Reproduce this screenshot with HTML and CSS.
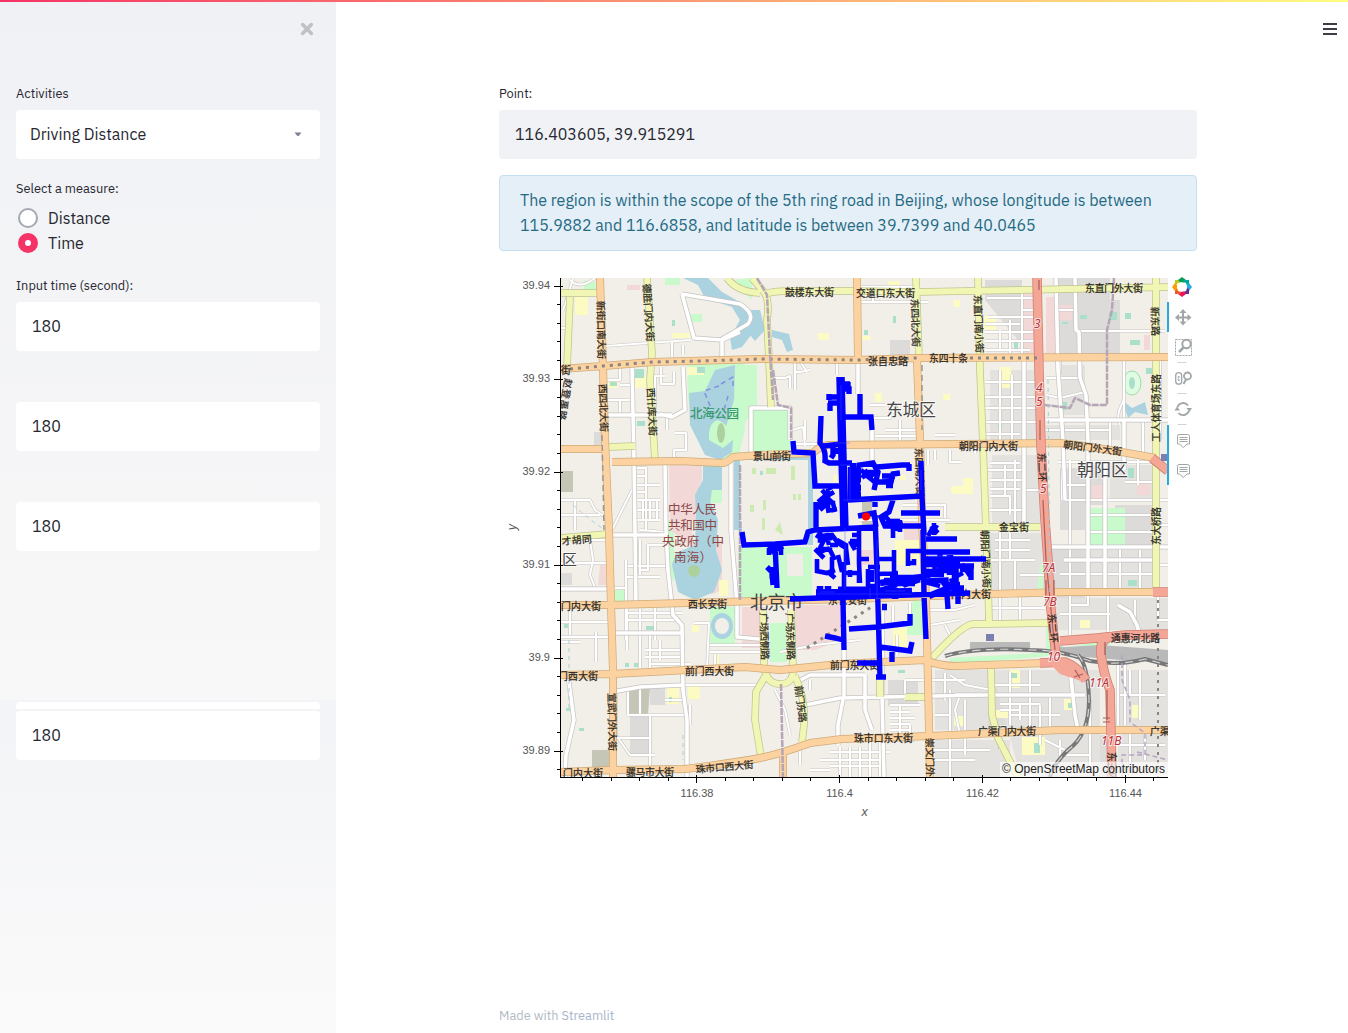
FILE: index.html
```html
<!DOCTYPE html>
<html lang="en">
<head>
<meta charset="utf-8">
<title>Driving Distance</title>
<link rel="stylesheet" href="styles.css">
</head>
<body>
<div class="decoration"></div>
<div class="app">
<aside class="sidebar">
  <button class="close" aria-label="Close"><svg width="14" height="14" viewBox="0 0 14 14"><path d="M2.6 2.6 11.4 11.4M11.4 2.6 2.6 11.4"/></svg></button>
  <label class="label">Activities</label>
  <div class="field select"><span>Driving Distance</span><svg width="8" height="5" viewBox="0 0 8 5"><path d="M0.5 .5h7L4.8 3.8q-.8.7-1.6 0z"/></svg></div>
  <div class="label measure">Select a measure:</div>
  <div class="radio"><i></i><span>Distance</span></div>
  <div class="radio on"><i></i><span>Time</span></div>
  <div class="label time">Input time (second):</div>
  <div class="field">180</div>
  <div class="field next">180</div>
  <div class="field next">180</div>
  <div class="strip"></div>
  <div class="field last">180</div>
</aside>
<main class="main">
  <button class="menu" aria-label="Menu"><i></i><i></i><i></i></button>
  <div class="content">
    <label class="label">Point:</label>
    <div class="field point">116.403605, 39.915291</div>
    <div class="info">The region is within the scope of the 5th ring road in Beijing, whose longitude is between<br>115.9882 and 116.6858, and latitude is between 39.7399 and 40.0465</div>
    <svg class="chart" width="698" height="560" viewBox="499 267 698 560">
      <defs>
        <clipPath id="frame"><rect x="561" y="278" width="607" height="499"/></clipPath>
        <path id="minor" d="M573 278 565 305 563 310M561 328H567M595 278Q580 290 570 280M606 346 690 340M672 341V362M683 345V355M620 367V380H606M620 385H632M661 367V384H674V372M665 376H655V410M606 400H633M620 400V415M606 415H672M675 433H686V450H674V462M667 430V416M635 468H646V530M634 476H646M634 485H660M634 492H646M634 500H660M634 510H660M634 520H660M643 500V520M650 500V520M657 500V520M632 490 612 530M561 500H590L595 510 610 520M575 500V530M561 515H600M590 540 593 560 590 575 596 590M561 563H606M606 588H626V640M626 560V605M628 566H666M626 577H660M640 540V575M640 570H648V545H668M583 540H610M627 605V650M640 605V668M627 613H682M627 620H680M650 632V668M660 640V660M655 605V640M645 650H682M645 657H682M650 664H690M561 637H610M570 605V635M596 632V662M561 642H580M561 622H608M616 690V735L630 755H655M627 715H690M640 687V715M650 715V777M628 715V690M616 738H650M665 700H684M690 705V725M682 685H760M694 623H709L707 668M710 652H765M710 645H765M715 655V665M640 530 666 532"/>
        <path id="wide" d="M682 294 694 338 722 340 740 332M682 294 740 304Q756 314 748 324L722 339V357M632 367 634 460 635 530 636 605M683 367 685 410 672 417 660 414M606 415H672M665 463 666 530 668 570 673 615 682 625 683 690 687 720 687 777M731 463V530L737 605 737 637 770 640M751 456V408H790V440M561 589H615M610 535H665M612 633H682M568 675 574 720 566 755 565 777M612 692 640 687 682 685M858 361V394M872 430V460M844 650V695L838 725V745M865 675V710L872 730M882 660V695L884 777M797 682 810 675 865 675M805 705 840 698 885 697 985 695M1024 360V525M1056 278 1058 370 1063 440 1065 500M1075 278 1076 330 1079 332 1080 378 1086 395 1088 440 1088 592M1046 420 1168 420M1105 462V592M1124 420V470M1050 547H1168M1064 560H1155M1118 605 1130 612 1137 625 1140 637M1070 668 1075 715 1078 730M955 695H1085"/>
        <path id="minor2" d="M860 287H915M860 302H928M873 303V290M795 361V372H800L810 370M800 361 807 372M775 378H785L790 376V388M795 370V390M837 361V375M792 430 803 427 805 446M792 444H820M805 420V440M872 418H890V405M885 430H920M900 420V445M870 405H885M876 436H918M950 450V462H961M975 448V453M935 450V460M928 465V450M860 520H950M903 505H945V518M935 435H955M985 350H1030M985 332H1033M1000 330V350M1010 320V357M1022 290V357M987 298H1035M1022 310H1035M988 317H1035M985 324H1020M985 341H1035M985 382H1040M985 408H1040M985 422H1040M985 397H1040M985 434H1020M1000 370V440M1012 375V440M985 470H1024M990 463H1020M990 480H1024M990 489H1020M1005 465V495M990 496H1010V514M1015 460V530M985 510H1024M1024 490H1040M1046 395 1060 398 1085 392M1046 378H1080M1060 355V375M1080 331H1165M1058 310H1076M1124 361V420M1124 400Q1115 415 1120 425M1110 421V454M1143 421V453M1046 430H1110M1058 462H1152M1065 485H1088M1065 500H1152M1070 460V540M1062 470V500M1125 482H1155M1138 460V485M1070 530V592M1088 515H1152M1088 532H1155M1060 574H1155M1140 550V592M1120 547V592M1000 530V592M1010 533V560H1035M985 560H1015V592M1020 575H1045M995 540H1030M995 550H1030M1000 595V624M1020 595V624M990 608H1045M1088 595V605H1070M1108 595V635M1135 600V625M1070 595V635M1060 614H1110M1158 597V620H1168M1160 361V440M1157 500H1168M1157 525H1168M1157 565H1168"/>
        <path id="minor3" d="M865 675V690M905 680V700M905 680H965M890 705H920M890 712H910M890 718H915M890 724H910M890 730H910M890 740H915M900 705V735M910 725V735M880 742V777M820 760H885M840 747V777M850 747V777M860 747V777M870 747V777M830 752H890M830 766H880M800 745V765M810 770H830M870 740V760M945 673V700M960 695 955 710 960 735M950 675 965 685 992 690M950 690V780M965 700V730M935 715H950M930 750H990M965 735V755M930 760H975M1060 740V755H1090M995 685H1040M1010 672V725M1030 670V730M1050 695V730M1040 705V745M1000 730V750M1045 740 1065 750M1010 715H1060M1000 704H1040M1000 710H1020M1020 705V720M1090 700V770M1118 660V725M1125 660V725M1120 695H1165M1130 670V695M1140 670V720M1120 745H1165M1130 730V777M1145 735V760M775 690 785 710 790 735M810 680V690M883 605V660M893 606V625M910 603V616M897 635V655M930 610H955L975 605M930 625 960 620M945 625 950 635M780 652 815 645 860 640"/>
        <path id="yellow" d="M561 293H599M570 297 567 367M647 278 652 353 650 380 655 460M608 447 635 446M727 278Q737 292 760 293M752 278 764 292Q770 300 767 320L769 360 771 407M766 294Q772 291 790 291H855L917 292 1020 290 1168 287M916 278 919 358M978 278 980 370 983 445 986 530 988 580 989 624M945 527H1040M989 624H973Q962 625 932 658M989 624 1048 623M1156 278V590M991 668 992 715 998 738 1018 777M763 610 764 665Q766 684 780 684T793 668L791 610M766 675 756 692 755 720 761 757M795 676Q806 700 804 725L802 742M880 680V697M905 697H928M561 538 608 534"/>
        <path id="orange" d="M561 369 603 366 653 362 690 361 760 359 857 360 917 358 1168 357M600 278 603 367 605 440 609 530 611 605 613 670 613 777M561 449H604M612 462 680 461 723 463Q728 462 733 457L760 455 813 453Q820 446 828 445L960 444 1060 443Q1090 446 1155 458M561 605 611 605 760 601 850 599 960 595 1065 592H1168M561 675 612 674 745 667 780 670 840 664 925 660Q940 666 955 666L1045 663M561 772 612 770 685 769Q740 762 760 758T810 743L842 739 930 736 1060 730 1168 730M857 278 858 360M917 360 920 440 922 520 926 600 928 680 930 777M783 753V777"/>
        <path id="trunk" d="M1037 278 1039 370 1041 445 1045 520 1048 560 1050 600 1056 656M1060 641 1097 638 1125 635 1168 634M1168 471 1152 458M1120 636Q1098 635 1101 655T1110 690L1112 777M1040 663 1065 662Q1078 667 1086 680M1153 592H1168"/>
        <path id="rail" d="M945 656Q975 647 1030 650 1060 650 1090 661 1120 666 1145 659L1168 665M1078 655Q1088 665 1089 700 1089 735 1068 750 1053 765 1050 777"/>
      </defs>
      <g clip-path="url(#frame)">
        <rect class="land" x="561" y="278" width="607" height="499"/>
        <g class="grey-area"><path d="M985 280H1022V357H1022V345L985 300zM1058 300H1120V357H1058zM1058 278H1110V330H1080V310H1058zM1060 468H1085V530H1060zM990 670H1080V725H990zM1040 545H1085V625H1060zM960 705H990V728H940zM1056 735H1108V777H1040zM1120 695H1168V725H1120zM895 340H910V357H890V340zM888 680H918V706H888zM1115 505H1152V545H1115zM630 715H650V755H630zM650 686H665V705H650zM561 573H572V585H561zM1000 455H1025V520H1000zM1088 285H1110V330H1088zM605 448H594V432H604zM1080 465H1105V505H1080zM750 556H768V580H750zM1090 600H1105V625H1090zM1126 610H1150V630H1126z"/></g>
        <path class="pale" d="M990 370H1037V440H990zM992 455H1040V524H992zM1062 365H1085V415H1062zM1046 425H1120V440H1046zM1110 465H1152V500H1110zM990 533H1044V590H990zM1090 550H1152V590H1090zM1055 598H1168V630H1055zM935 670H988V730H935zM992 670H1100V775H1020zM1118 670H1168V775H1118zM935 740H1010V777H935z"/>
        <path class="dim" d="M628 690 650 687 648 715H628zM561 471H573V492H561zM592 750H610V767H592zM862 500H872V525H862z"/>
        <path class="green" d="M687 363H745V430L738 458H718L700 440 688 400zM734 280 752 278V300zM745 365H757V405L740 430zM752 410H791V453H752zM738 547H812V600H738zM1090 508H1125V545H1090zM770 623H787V662H770zM913 600H924V635H906zM614 590H626V602H614zM1040 565H1043V590H1037zM710 607H735V645H710zM590 282H596V290H584V280zM691 314H702V322H691zM665 278H680V285H665zM950 658 1040 653 1090 643 1110 640V645L1060 655 950 665zM1046 620H1052V650H1046zM668 520H674V580H668z"/>
        <path class="pink" d="M669 465H702V480L695 500 700 520H690L695 550 670 530zM742 607H765V648H742zM793 605H842V640L815 650H793zM1023 292H1035V355H1023zM1046 297H1057V357H1046zM1058 305H1072V320H1058zM1092 485H1103V502H1092zM1137 482H1150V495H1137zM1144 335H1150V350H1144zM716 540H722V590L710 595 715 570zM860 550H874V565H860zM600 565H606V585H598zM627 285H640V290H627zM904 520H925V545H904z"/>
        <path class="water" d="M683 278H708L722 292 745 305 758 317 755 330 742 347 732 350 730 338 740 320 732 307 705 298 698 285zM735 365 734 400 725 430 733 440 732 452 720 460 705 455 690 425 689 393 705 391 715 370zM703 466H722V490L711 503 718 520 716 550 722 570 714 592 695 600 678 592 672 565 676 553 695 545 696 515 695 495 703 480zM734 460H740V530H734zM736 460H808V545H813V457H736zM750 310H760L765 330 755 341 750 335zM772 330 789 334 793 350 787 352 782 340 772 337zM1122 400 1132 408 1145 402 1148 415 1135 412 1128 418zM1060 646Q1080 655 1110 642L1098 655 1060 650zM739 522H745V544H739z"/>
        <ellipse class="water" cx="722" cy="626" rx="11" ry="13"/><ellipse class="land" cx="722" cy="626" rx="7" ry="8"/>
        <path class="green" d="M718 420Q730 425 733 440L723 448 709 440Q708 422 718 420M712 490H722V503H710z"/><circle class="wood" cx="694" cy="571" r="6"/><ellipse class="wood" cx="721" cy="433" rx="4" ry="10"/>
        <path class="court" d="M742 465H805V535H790V542H762V535H742zM787 554H803V576H787z"/>
        <path class="lawn" d="M752 468H756V474H752zM763 500H766V510H763zM762 518H765V530H762zM766 468H776V474H766zM791 466H795V480H791zM793 494H796V500H793zM798 494H801V500H798zM750 505H754V512H750zM775 530 780 522 783 535z"/>
        <path class="school" d="M575 297H588V315H575zM635 376H646V388H635zM608 380H618V388H608zM672 333H690V338H672zM687 367H704V375H687zM818 333H829V340H818zM862 336H871V340H862zM875 393H882V402H875zM943 394H950V400H943zM833 475H837V482H833zM900 475H906V480H900zM963 478H973V494H952V486H963zM984 316H996V330H984zM1000 367H1011V388H1000zM953 300H960V307H953zM951 487H958V492H951zM692 625H699V632H692zM715 655H719V665H715zM667 686H679V704H667zM688 686H700V699H688zM719 580H728V596H719zM893 628H907V650H893zM895 540H925V565H895zM1022 737H1045V755H1022zM996 710H1008V718H996zM1064 699H1073V710H1064zM1010 670H1020V688H1010zM1132 705H1142V718H1132zM954 716H966V726H954zM888 281H900V285H888zM1080 620H1090V628H1080z"/>
        <path class="park" d="M635 369H644V378H635zM637 421H645V426H637zM610 382H617V386H610zM672 320H675V326H672zM893 316H896V323H893zM1109 312H1117V320H1109zM1080 315H1087V319H1080zM1125 313H1131V319H1125zM1014 340H1018V349H1014zM1062 322H1068V324H1062zM1062 402H1067V410H1062zM1128 468H1134V478H1128zM1128 580H1137V586H1128zM1130 340H1140V345H1130zM564 624H568V628H564zM646 626H655V630H646zM625 663H629V667H625zM634 663H638V667H634zM669 697H672V702H669zM1034 743H1040V753H1034zM1068 703H1073V708H1068zM1010 673H1017V678H1010zM898 670H905V673H898zM566 708H571V711H566zM579 728H584V731H579zM998 420H1002V427H998zM864 330H868V335H864zM1146 368H1152V374H1146zM697 367H705V373H697zM760 471H763V475H760zM961 550H968V555H961z"/>
        <ellipse class="stadium" cx="1132" cy="383" rx="9" ry="12"/><ellipse class="stadium-in" cx="1132" cy="383" rx="3" ry="6"/>
        <g class="minor-case"><use href="#minor"/><use href="#minor2"/><use href="#minor3"/></g>
        <g class="minor-fill"><use href="#minor"/><use href="#minor2"/><use href="#minor3"/></g>
        <use class="wide-case" href="#wide"/><use class="wide-fill" href="#wide"/>
        <path class="station" d="M970 642H1030V650H970zM1050 648 1100 645 1168 650V663L1120 660 1060 655z"/>
        <use class="rail-line" href="#rail"/><use class="rail-dash" href="#rail"/>
        <use class="yellow-case" href="#yellow"/><use class="yellow-fill" href="#yellow"/>
        <use class="orange-case" href="#orange"/><use class="orange-fill" href="#orange"/>
        <use class="trunk-case" href="#trunk"/><use class="trunk-fill" href="#trunk"/>
        <path class="trunk-blob" d="M1054 658 1072 663 1087 683 1060 674 1053 667z"/>
        <path class="blue-box" d="M986 634H994V641H986zM1161 454H1168V461H1161z"/>
        <path class="metro" d="M570 369 603 366 653 362 700 361 760 359 857 360 917 358M970 358H1040M807 648 873 606"/>
        <path class="metro thin" d="M1158 600V777"/>
        <path class="subway" d="M602 435 604 530M922 365V430M895 403 900 415"/>
        <path class="border" d="M757 278 767 295 770 355 773 400M773 370 778 405 791 408V440M740 465V600M781 684 783 777M1114 278 1112 310 1107 330V405H1090L1075 398 1070 408 1045 405"/>
        <path class="border-dash" d="M1122 655V680L1130 700V722L1145 733V755H1122V777M1137 752 1168 760"/>
        <path class="ringline" d="M1040 420V440M1043 500 1046 560 1050 600 1055 650M1039 280V290M1046 580V595M1054 580V595M1105 642V655M1107 690V720M1103 718H1110M1103 722H1110M1075 670 1080 678M1074 677 1083 674"/>
        <path class="bluedash" d="M719 386 704 391 711 408M721 384 733 377V390M728 396 724 410"/>
        <path class="riverdash" d="M1048 380 1050 600M569 640V710M683 735V760M573 505Q590 520 605 530"/>

        <g class="place">
          <text x="690" y="418" class="parkname" textLength="49">北海公园</text>
          <text x="668" y="513.500" class="gov" textLength="49">中华人民</text><text x="668" y="529.500" class="gov" textLength="49">共和国中</text><text x="662" y="545.500" class="gov" textLength="62">央政府（中</text><text x="674" y="562" class="gov" textLength="38">南海）</text>
          <text x="886" y="416" class="district" textLength="50">东城区</text>
          <text x="1077" y="476" class="district" textLength="51">朝阳区</text>
          <text x="562" y="565" class="district small">区</text>
          <text x="750" y="609" class="city" textLength="53">北京市</text>
        </g>
        <g class="road">
          <text x="785" y="296" textLength="49">鼓楼东大街</text><text x="856" y="297" textLength="59">交道口东大街</text>
          <text x="1085" y="292" textLength="58">东直门外大街</text>
          <text x="868" y="365" textLength="40">张自忠路</text><text x="929" y="362" textLength="39">东四十条</text>
          <text x="753" y="460" textLength="38">景山前街</text><text x="959" y="450" textLength="59">朝阳门内大街</text>
          <text transform="translate(1063 448) rotate(7)" textLength="59">朝阳门外大街</text>
          <text x="999" y="531" textLength="30">金宝街</text>
          <text transform="translate(562 545) rotate(-5)" textLength="30">才胡同</text>
          <text x="561" y="610" textLength="40">门内大街</text><text x="688" y="608" textLength="39">西长安街</text>
          <text x="828" y="604" textLength="39">东长安街</text><text x="951" y="598" textLength="40">门内大街</text>
          <text x="558" y="680" textLength="40">门西大街</text><text x="685" y="675" textLength="49">前门西大街</text><text x="830" y="669" textLength="49">前门东大街</text>
          <text x="563" y="777" textLength="40">门内大街</text><text x="626" y="776" textLength="48">骡马市大街</text>
          <text transform="translate(696 773) rotate(-5)" textLength="58">珠市口西大街</text><text x="854" y="742" textLength="59">珠市口东大街</text>
          <text x="978" y="735" textLength="58">广渠门内大街</text><text x="1150" y="735" textLength="30">广渠门</text><text x="1111" y="642" textLength="49">通惠河北路</text>
          <text transform="translate(597 301) rotate(89)" textLength="58">新街口南大街</text><text transform="translate(599 384) rotate(88)" textLength="48">西四北大街</text>
          <text transform="translate(643 284) rotate(86)" textLength="58">德胜门内大街</text><text transform="translate(647 388) rotate(87)" textLength="48">西什库大街</text>
          <text transform="translate(561 374)">街</text><text transform="translate(565 378) rotate(100)" textLength="42">赵登禹路</text>
          <text transform="translate(911 299) rotate(88)" textLength="48">东四北大街</text><text transform="translate(915 448) rotate(88)" textLength="48">东四南大街</text>
          <text transform="translate(974 295) rotate(88)" textLength="58">东直门南小街</text><text transform="translate(981 530) rotate(88)" textLength="58">朝阳门南小街</text>
          <text transform="translate(1038 453) rotate(88)" textLength="29">东二环</text><text transform="translate(1048 614) rotate(85)" textLength="29">东二环</text>
          <text transform="translate(1151 307) rotate(88)" textLength="29">新东路</text>
          <text transform="translate(1160 442) rotate(-90)" textLength="68">工人体育场东路</text><text transform="translate(1160 545) rotate(-90)" textLength="38">东大桥路</text>
          <text transform="translate(608 693) rotate(89)" textLength="58">宣武门外大街</text>
          <text transform="translate(760 613) rotate(88)" textLength="47">广场西侧路</text><text transform="translate(786 613) rotate(88)" textLength="47">广场东侧路</text>
          <text transform="translate(795 686) rotate(83)" textLength="37">前门东路</text><text transform="translate(926 738) rotate(89)" textLength="58">崇文门外大街</text>
          <text transform="translate(1108 752) rotate(90)" textLength="29">东三环</text>
        </g>
        <g class="exit"><text x="1034" y="328">3</text><text x="1036" y="392">4</text><text x="1036" y="406">5</text><text x="1040" y="493">5</text><text x="1042" y="572">7A</text><text x="1043" y="606">7B</text><text x="1047" y="661">10</text><text x="1089" y="687">11A</text><text x="1101" y="745">11B</text></g>

        <g class="reach">
          <path class="w8" d="M840.500 377 842 440 844.500 530M816 593.500 880 593 912 592"/>
          <path class="w10" d="M838 592H878"/>
          <path class="w5" d="M841 384H850M843 389H849V394M848 382V388M841 397 828 397M829 394V400M841 403H828M830 403V411M860 394V416M842 417H871L872 430M821 416 820 443Q826 449 825 461L829 463H852M824 446 842 444M833 447V455L831 458M837 448V454M793 441 794 452 813 453 815 486 842 486M816 502V530M742 532 744 545 775 544 805 542 808 532 815 530 878 527M775 544 777 588M768 543 773 551 783 546M767 567 772 572 773 585M790 599 850 597 970 593M843 600 844 650M825 636 835 638 843 640M875 515 877 570 880 678M876 677H886M849 629 878 627 910 623V614M880 647 910 651 912 642M892 650V662M857 663H878M923 530 924 595 926 639M926 539H957M926 552H970M926 559H986M921 461 922 496 924 535M848 500 923 496M901 513H940M875 500V507M902 526H926M893 500 889 512 881 517 885 526H902M858 516 874 513 876 527M877 467 902 465H910M858 477 859 465 873 463 878 472 874 490M874 482 891 482 893 474 900 473M882 476H895M909 464V471M926 581 946 580 948 609M958 592V604M956 562 956 590M947 566H974M960 569 971 570V580M935 562V573M943 561 948 570M940 554V562M943 588H964"/>
          <path class="w6" d="M851 467V500M857 470V500M848 479H861M848 488H861M848 495H861M853 463V470M926 564H960M952 578 956 592M929 596 946 589M950 555V575M820 586V597M828 586V597M835 589V597M870 590V597M895 588V599M938 567 955 570M880 583 922 577M882 607H887M955 570V595"/>
          <path class="w4" d="M822 490 827 496 834 492M828 489V510M818 502 825 496 833 503 835 512M817 508 826 498M820 510 829 502 835 503M826 511 837 509M828 489 832 487M861 470 869 477 877 472M862 478 868 470M867 476 877 484M863 476H873M862 472H876M887 480 891 486M893 480 882 482M886 486H893M887 524 900 530M893 522V538M889 526 903 524M900 520V532M885 516 893 525M886 521H900M816 535 824 540 820 548 832 550M817 559V571L827 573 835 570M820 536 832 535 838 543 846 548 848 565M826 533 829 545M830 545H838M820 531V540L832 538M815 549 824 558M818 553 830 548M830 550 835 560M832 557V577M837 540 846 545V565M859 527V563L860 583M850 541H860M852 535H860M854 546 860 541M860 559H869M877 559H893M894 550V574M878 574 898 573M868 567H880M868 569V586H875M872 570V582M828 572 835 578M844 562V590M850 570V577M844 573H859M859 575V583M838 555 842 572M908 566V551H923M909 563H914V559M890 577H923M884 580H920M898 578 905 585 920 580M880 590 897 585M890 584H915M925 582 940 586M931 526 938 533M937 525 932 534M934 523V535M928 536 933 527M928 570V578M941 580 947 588M962 564 970 576M955 577 963 573M948 584H960M926 571H950M926 575H944M850 541 855 550M769 548V555M781 549V555M772 567V579"/>
          <path class="hair" d="M841 385V420M835 443H850M843 500H870M845 528V590M877 540V600M885 591H905M820 592H835M921 470V490M840 465H850M928 556H950M850 467V500M870 588V598M817 594H912"/>
        </g>
        <circle class="origin" cx="866" cy="516.5" r="4"/>
        <rect class="credit-bg" x="1000" y="762" width="168" height="15"/><text class="credit" x="1002" y="773" textLength="163">© OpenStreetMap contributors</text>
      </g>
      <g class="axis">
        <path d="M560.5 278V777.5M560 777.5H1168"/>
        <path d="M554 286.5h9M554 379.5h9M554 472.5h9M554 565.5h9M554 658.5h9M554 751.5h9M696.5 775v8M839.5 775v8M982.5 775v8M1125.5 775v8"/>
        <path d="M557 304.5h4M557 323.5h4M557 341.5h4M557 360.5h4M557 397.5h4M557 416.5h4M557 434.5h4M557 453.5h4M557 490.5h4M557 509.5h4M557 527.5h4M557 546.5h4M557 583.5h4M557 602.5h4M557 620.5h4M557 639.5h4M557 676.5h4M557 695.5h4M557 713.5h4M557 732.5h4M557 769.5h4M582.5 777v4M611.5 777v4M639.5 777v4M668.5 777v4M725.5 777v4M753.5 777v4M782.5 777v4M810.5 777v4M868.5 777v4M896.5 777v4M925.5 777v4M953.5 777v4M1010.5 777v4M1039.5 777v4M1067.5 777v4M1096.5 777v4M1153.5 777v4"/>
      </g>
      <g class="ticks"><g class="end"><text x="550" y="289">39.94</text><text x="550" y="382">39.93</text><text x="550" y="475">39.92</text><text x="550" y="568">39.91</text><text x="550" y="661">39.9</text><text x="550" y="754">39.89</text></g>
      <g class="mid"><text x="697" y="797">116.38</text><text x="839.5" y="797">116.4</text><text x="982.5" y="797">116.42</text><text x="1125.5" y="797">116.44</text><text class="axis-name" x="864.500" y="816">x</text><text class="axis-name" transform="translate(516 527) rotate(-90)">y</text></g></g>
      <g class="logo" transform="translate(1182 287)">
        <path fill="#b5cc18" d="M-7-7H-2L0-5-4-4-6-2-7-3z"/><path fill="#009e58" d="M-4-7 0-10 4-7 2-4.500-2-5z"/><path fill="#00a99d" d="M2-7H7V-2L5-1 4-4 1-5z"/><path fill="#29abe2" d="M7-4 10 0 7 4 5 2V-2z"/><path fill="#6b2c91" d="M7 2V7H2L1 5 4 4 5 1z"/><path fill="#ed145b" d="M4 7 0 10-4 7-2 5 2 4.500z"/><path fill="#f1592a" d="M-2 7H-7V2L-5 1-4 4-1 5z"/><path fill="#ff9e00" d="M-7 4-10 0-7-4-5-2V2z"/>
      </g>
      <path class="active" d="M1168 302V332M1168 425V485"/>
      <g class="tool">
        <path d="M1183 312V323M1178 317.5H1189" stroke-width="2"/><path class="solid" d="M1183 309l3.5 4h-7zM1183 325.500l3.500-4h-7zM1175 317.500l4-3.500v7zM1191.500 317.500l-4-3.500v7z"/>
        <path stroke-dasharray="2 1" d="M1175.500 339.500H1191.500V355.500H1175.500z"/><circle class="white" cx="1186.500" cy="344" r="4.200" stroke-width="2"/><path d="M1183.500 347.500 1179 352" stroke-width="2.500"/>
        <path d="M1177.500 362.500h9M1177.500 393.500h9M1177.500 424.500h9" class="sep"/>
        <rect x="1175.700" y="372.700" width="6" height="11.500" rx="3" stroke-width="1.300"/><path d="M1178.700 376v5M1177.500 377.500l1.200-1.500 1.200 1.500M1177.500 379.500l1.200 1.500 1.200-1.500" stroke-width=".8"/><circle cx="1187.500" cy="376" r="3.500" stroke-width="1.800"/><path d="M1186 379.500 1183.500 384" stroke-width="2"/>
        <path d="M1177.500 407A6 6 0 0 1 1188 405.500M1188.800 411A6 6 0 0 1 1178.500 413" stroke-width="1.900"/><path class="solid" d="M1186.500 408h5.500l-2.500 4zM1174.500 410.500h5.500l-3-4z"/>
        <g id="hover"><path d="M1179 434.500H1187.500Q1189.500 434.500 1189.500 436.500V444H1187L1183.300 447.500 1179.500 444H1177.500V436.500Q1177.500 434.500 1179 434.500M1179.500 437.500H1187.500M1179.500 439.500H1187.500M1179.500 441.500H1187.500"/></g><use href="#hover" y="30"/>
      </g>
    </svg>
  </div>
  <footer>Made with <span>Streamlit</span></footer>
</main>
</div>
</body>
</html>
```
FILE: styles.css
```css
*{box-sizing:border-box}
body{margin:0;width:1348px;height:1033px;overflow:hidden;background:#fff;color:#262730;font:16px/25px "IBM Plex Sans","Roboto","Noto Sans",sans-serif;display:flex;flex-direction:column}
button{border:0;background:none;padding:0;display:block}
.decoration{height:2px;flex:none;background:linear-gradient(90deg,#f63366,#fffd80)}
.app{display:flex;flex:1}
.sidebar{width:336px;flex:none;padding:20px 16px 0;display:flex;flex-direction:column;background:linear-gradient(#f0f1f5 0,#f8f8f8 698px,#f3f4f7 698px,#fafafa 1031px)}
.close{align-self:flex-end;width:14px;height:14px;margin-right:6px;margin-bottom:48px}
.close svg{display:block}
.close path{stroke:#bfc1c5;stroke-width:3.500;stroke-linecap:round}
.label{display:block;font-size:12.800px;line-height:19px;height:26px}
.field{height:49px;flex:none;background:#fff;border-radius:4px;padding:12px 16px}
.select{display:flex;justify-content:space-between;align-items:center;padding:0 18px 0 14px}
.select svg{fill:#7b7f91}
.measure{margin-top:20px}
.radio{display:flex;align-items:center;height:25px;padding-left:2px;gap:10px}
.measure+.radio{margin-top:1px}
.radio i{width:20px;height:20px;border-radius:50%;border:2px solid #a3a8b4;background:#fff;margin-top:-1px}
.radio.on i{border:7px solid #f63366}
.time{margin-top:20px}
.next{margin-top:51px}
.strip{height:7px;flex:none;background:#fff;margin-top:151px;border-radius:4px 4px 0 0}
.last{margin-top:2px}
.main{flex:1;display:flex;flex-direction:column}
.menu{align-self:flex-end;width:14px;height:12px;margin:21px 11px 49px 0;display:flex;flex-direction:column;justify-content:space-between}
.menu i{height:2px;background:#3c3d46}
.content{width:698px;margin-left:163px}
.point{background:#f0f2f6}
.info{margin-top:16px;height:76px;border:1px solid #c5dff3;border-radius:4px;background:#e5eff8;color:#246a83;padding:12px 20px;white-space:nowrap}
.chart{display:block;margin-top:16px}
footer{margin:177px 0 0 163px;font-size:12.800px;line-height:24px;color:#b3bac5}
footer span{color:#a9b4cb}
.land{fill:#f2efe9}
.grey-area{fill:#dcdbda}.pale{fill:#e4e2df}.dim{fill:#c6c6b6}.green{fill:#c8facc}.pink{fill:#f3d8d8}.water{fill:#aad3df}.wood{fill:#add19e}
.court{fill:#f0eee7}.lawn{fill:#cdebb0}.school{fill:#fdfbc4}.park{fill:#aadfca}.stadium{fill:#dffce2;stroke:#9bdcac}.stadium-in{fill:#aadfca}.blue-box{fill:#7b80b0}
.minor-case,.minor-fill,.wide-case,.wide-fill,.yellow-case,.yellow-fill,.orange-case,.orange-fill,.trunk-case,.trunk-fill,.rail-line,.rail-dash,.metro,.subway,.border,.border-dash,.ringline,.bluedash,.riverdash{fill:none;stroke-linejoin:round}
.minor-case{stroke:#c9c7c5;stroke-width:3.200}.minor-fill{stroke:#fff;stroke-width:2}
.wide-case{stroke:#c6c3c1;stroke-width:5}.wide-fill{stroke:#fff;stroke-width:3.600}
.yellow-case{stroke:#bfc58d;stroke-width:7.500}.yellow-fill{stroke:#f2f6b5;stroke-width:6}
.orange-case{stroke:#ceaa78;stroke-width:8}.orange-fill{stroke:#fcd3a0;stroke-width:6.600}
.trunk-case{stroke:#cf7d70;stroke-width:9.500}.trunk-fill{stroke:#f4a697;stroke-width:8}
.trunk-blob{fill:#f4a697}.station{fill:#b9b9b9}
.rail-line{stroke:#777;stroke-width:4}.rail-dash{stroke:#d5d5d5;stroke-width:1.200;stroke-dasharray:8 6}
.metro{stroke:#8a8580;stroke-width:3;stroke-dasharray:3 5}.metro.thin{stroke-width:2}
.subway{stroke:#9c9791;stroke-width:1.500;stroke-dasharray:6 4}
.border{stroke:#b5a5b5;stroke-width:2.500;stroke-dasharray:7 1}.border-dash{stroke:#b6a4c4;stroke-width:1.500;stroke-dasharray:5 3}
.ringline{stroke:#a85f5c;stroke-width:1.200}.bluedash{stroke:#8490e0;stroke-width:1.500;stroke-dasharray:5 4}.riverdash{stroke:#a5cfd9;stroke-dasharray:4 4}
.place,.road{font-family:"Noto Sans CJK SC",sans-serif}
.parkname{font-size:12.500px;fill:#329568;stroke:#329568;stroke-width:.2}.gov{font-size:12.500px;fill:#8b4848}
.district{font-size:17px;fill:#484848;stroke:#fff;stroke-opacity:.7;stroke-width:2;paint-order:stroke}.district.small{font-size:15px}
.city{font-size:18px;fill:#404040}
.road{font-size:9.800px;fill:#2d2925;stroke:#2d2925;stroke-width:.25}
.exit{font:italic 12px "Noto Sans",sans-serif;fill:#b8333b;stroke:#fff;stroke-opacity:.7;stroke-width:2;paint-order:stroke}
.reach{fill:none;stroke:#00f;stroke-linejoin:miter}
.w10{stroke-width:11}.w8{stroke-width:8.500}.w6{stroke-width:6.500}.w5{stroke-width:5.400}.w4{stroke-width:4.600}.hair{stroke:#4d58ff;stroke-width:.4}
.origin{fill:red}
.credit-bg{fill:#fff;fill-opacity:.65}.credit{font:12px "Liberation Sans",sans-serif;fill:#222}
.axis{fill:none;stroke:#000;shape-rendering:crispEdges}
.ticks{font:11px "Liberation Sans",sans-serif;fill:#555}.end{text-anchor:end}.mid{text-anchor:middle}.axis-name{font-size:12.500px;font-style:italic}
.active{stroke:#26aae1;stroke-width:2}
.tool{fill:none;stroke:#a1a6a9}.tool .solid{fill:#a1a6a9;stroke:none}.tool .white{fill:#fff}.tool .sep{stroke:#d3d3d3}
```
